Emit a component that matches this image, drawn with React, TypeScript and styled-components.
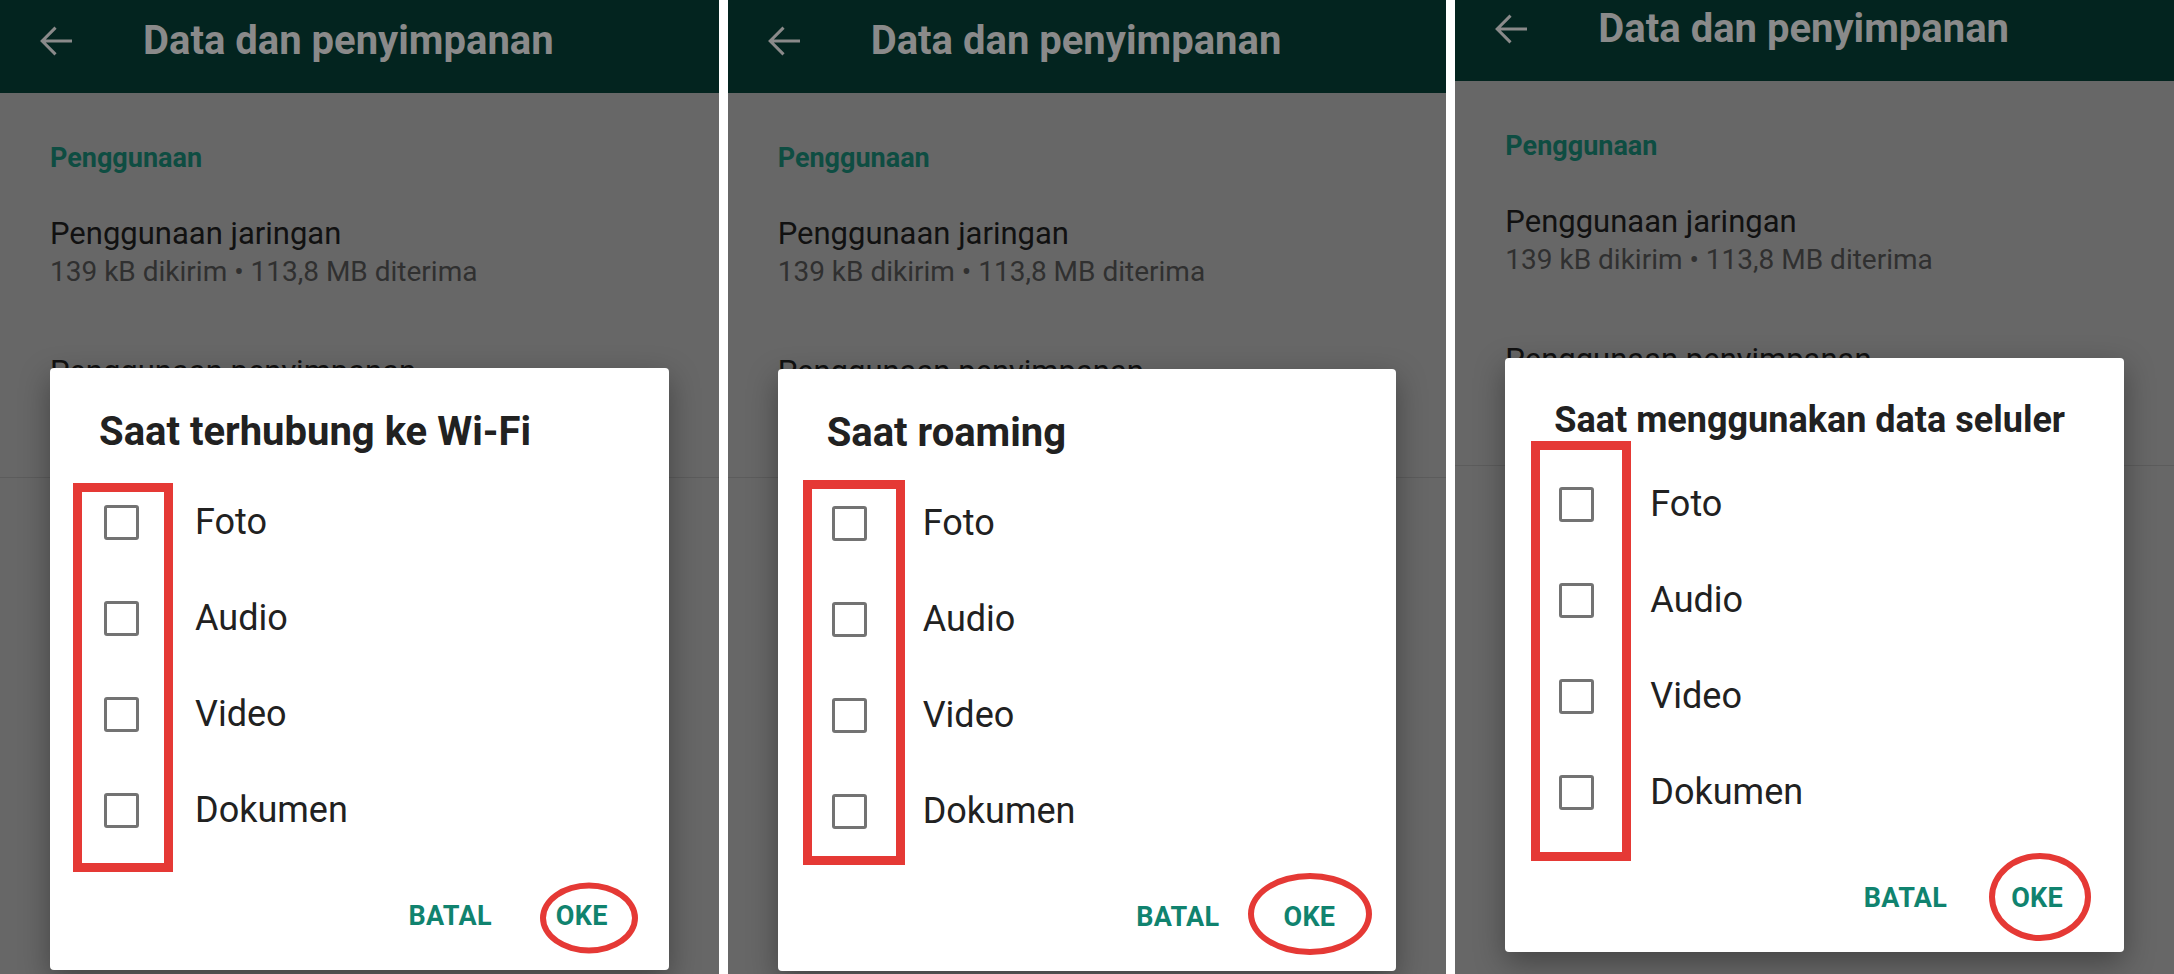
import React from "react";
import styled, { createGlobalStyle } from "styled-components";

const GlobalStyle = createGlobalStyle`
  html, body {
    margin: 0;
    padding: 0;
    background: #ffffff;
  }
  body {
    font-family: Roboto, "Noto Sans", "Liberation Sans", sans-serif;
  }
  * {
    box-sizing: border-box;
  }
`;

const Strip = styled.div`
  display: flex;
  gap: 9px;
  width: 2174px;
  height: 974px;
  overflow: hidden;
  background: #ffffff;
`;

const Phone = styled.div`
  flex: 1;
  min-width: 0;
  overflow: hidden;
  background: #676767;
`;

const Screen = styled.div<{ $lift: number }>`
  position: relative;
  margin-top: ${(p) => -p.$lift}px;
`;

const AppBar = styled.header`
  display: flex;
  align-items: center;
  height: 93px;
  padding: 0 0 12px 32px;
  background: #03241f;
  color: #8a8a8a;
  svg {
    flex: none;
    display: block;
  }
`;

const BarTitle = styled.h1`
  margin: 0 0 0 63px;
  font-size: 40px;
  font-weight: 700;
  line-height: 48px;
  color: #8a8a8a;
  white-space: nowrap;
`;

const Section = styled.section`
  padding: 45px 0 59px;
  border-bottom: 1px solid #5c5c5c;
`;

const SectionLabel = styled.div`
  padding-left: 50px;
  font-size: 27px;
  font-weight: 700;
  line-height: 40px;
  color: #0e4d42;
`;

const Item = styled.div`
  padding: 36px 50px 26px;
`;

const ItemTitle = styled.div`
  font-size: 31px;
  line-height: 40px;
  color: #111111;
  white-space: nowrap;
`;

const ItemSub = styled.div`
  font-size: 28px;
  line-height: 36px;
  color: #303030;
  white-space: nowrap;
`;

const Dialog = styled.div<{ $top: number }>`
  position: absolute;
  top: ${(p) => p.$top}px;
  left: 50px;
  right: 50px;
  padding-bottom: 18px;
  background: #ffffff;
  border-radius: 4px;
  box-shadow: 0 10px 30px rgba(0, 0, 0, 0.35);
`;

const DialogTitle = styled.h2<{ $size: number; $top: number }>`
  margin: 0;
  padding: ${(p) => p.$top}px 30px 0 49px;
  font-size: ${(p) => p.$size}px;
  font-weight: 700;
  line-height: 44px;
  color: #212121;
  white-space: nowrap;
`;

const Options = styled.div<{ $gap: number }>`
  position: relative;
  margin-top: ${(p) => p.$gap}px;
`;

const Option = styled.label`
  display: flex;
  align-items: center;
  gap: 56px;
  height: 96px;
  padding-left: 54px;
  font-size: 36px;
  color: #212121;
`;

const Box = styled.span`
  flex: none;
  width: 35px;
  height: 35px;
  border: 3px solid #737373;
  border-radius: 3px;
`;

// red marker drawn around the checkbox column
const Highlight = styled.div<{ $left: number; $top: number; $w: number; $h: number }>`
  position: absolute;
  left: ${(p) => p.$left}px;
  top: ${(p) => p.$top}px;
  width: ${(p) => p.$w}px;
  height: ${(p) => p.$h}px;
  border: 9px solid #e53935;
  pointer-events: none;
`;

const Actions = styled.div`
  display: flex;
  justify-content: flex-end;
  align-items: center;
  gap: 32px;
  height: 72px;
  margin-top: 22px;
  padding-right: 45px;
`;

const ActionButton = styled.button`
  position: relative;
  padding: 0 16px;
  border: 0;
  background: none;
  font-family: inherit;
  font-size: 27px;
  font-weight: 700;
  line-height: 72px;
  letter-spacing: 0.3px;
  color: #10836f;
`;

// hand-drawn style circle over the confirm button
const Ring = styled.span<{ $w: number; $h: number; $dx: number; $dy: number }>`
  position: absolute;
  left: 50%;
  top: 50%;
  width: ${(p) => p.$w}px;
  height: ${(p) => p.$h}px;
  transform: translate(calc(-50% + ${(p) => p.$dx}px), calc(-50% + ${(p) => p.$dy}px));
  border: 6px solid #e53935;
  border-radius: 50%;
  pointer-events: none;
`;

const BackArrow = () => (
  <svg width="48" height="48" viewBox="0 0 24 24" fill="currentColor">
    <path d="M20 11.25H6.9l5.4-5.4-1.06-1.06L4.03 12l7.21 7.21 1.06-1.06-5.4-5.4H20z" />
  </svg>
);

interface Shot {
  lift: number;
  dialogTop: number;
  title: string;
  titleSize: number;
  titleTop: number;
  listGap: number;
  mark: { left: number; top: number; w: number; h: number };
  ring: { w: number; h: number; dx: number; dy: number };
}

const shots: Shot[] = [
  {
    lift: 0,
    dialogTop: 368,
    title: "Saat terhubung ke Wi-Fi",
    titleSize: 40,
    titleTop: 42,
    listGap: 20,
    mark: { left: 23, top: 9, w: 100, h: 389 },
    ring: { w: 98, h: 71, dx: 7, dy: 2 },
  },
  {
    lift: 0,
    dialogTop: 369,
    title: "Saat roaming",
    titleSize: 40,
    titleTop: 42,
    listGap: 20,
    mark: { left: 25, top: 5, w: 102, h: 385 },
    ring: { w: 124, h: 82, dx: 1, dy: -3 },
  },
  {
    lift: 12,
    dialogTop: 358,
    title: "Saat menggunakan data seluler",
    titleSize: 36,
    titleTop: 40,
    listGap: 14,
    mark: { left: 26, top: -15, w: 100, h: 420 },
    ring: { w: 102, h: 88, dx: 3, dy: -1 },
  },
];

const mediaTypes = ["Foto", "Audio", "Video", "Dokumen"];

function SettingsScreen() {
  return (
    <>
      <AppBar>
        <BackArrow />
        <BarTitle>Data dan penyimpanan</BarTitle>
      </AppBar>
      <Section>
        <SectionLabel>Penggunaan</SectionLabel>
        <Item>
          <ItemTitle>Penggunaan jaringan</ItemTitle>
          <ItemSub>139 kB dikirim • 113,8 MB diterima</ItemSub>
        </Item>
        <Item>
          <ItemTitle>Penggunaan penyimpanan</ItemTitle>
        </Item>
      </Section>
    </>
  );
}

function MediaDialog({ shot }: { shot: Shot }) {
  return (
    <Dialog $top={shot.dialogTop + shot.lift}>
      <DialogTitle $size={shot.titleSize} $top={shot.titleTop}>
        {shot.title}
      </DialogTitle>
      <Options $gap={shot.listGap}>
        {mediaTypes.map((m) => (
          <Option key={m}>
            <Box />
            {m}
          </Option>
        ))}
        <Highlight
          $left={shot.mark.left}
          $top={shot.mark.top}
          $w={shot.mark.w}
          $h={shot.mark.h}
        />
      </Options>
      <Actions>
        <ActionButton>BATAL</ActionButton>
        <ActionButton>
          OKE
          <Ring $w={shot.ring.w} $h={shot.ring.h} $dx={shot.ring.dx} $dy={shot.ring.dy} />
        </ActionButton>
      </Actions>
    </Dialog>
  );
}

export default function App() {
  return (
    <>
      <GlobalStyle />
      <Strip>
        {shots.map((shot) => (
          <Phone key={shot.title}>
            <Screen $lift={shot.lift}>
              <SettingsScreen />
              <MediaDialog shot={shot} />
            </Screen>
          </Phone>
        ))}
      </Strip>
    </>
  );
}
